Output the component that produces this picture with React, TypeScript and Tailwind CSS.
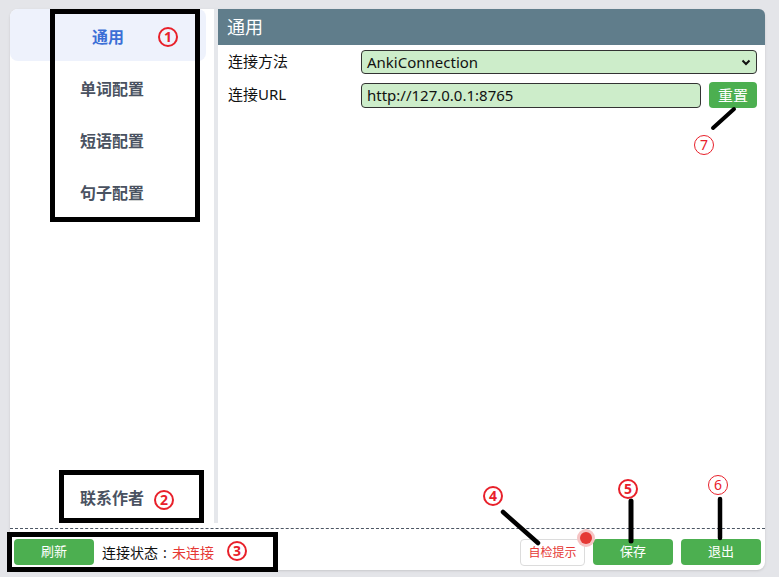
const cjk = { fontFamily: '"Noto Sans", "Noto Sans CJK SC", sans-serif' };

const navItems = ["通用", "单词配置", "短语配置", "句子配置"];

function Mark({ n, x, y, thin }: { n: string; x: number; y: number; thin?: boolean }) {
  return (
    <div
      className={
        "absolute flex h-[20px] w-[20px] -translate-x-1/2 -translate-y-1/2 items-center justify-center rounded-full text-[14px] leading-none text-[#e8202a] " +
        (thin ? "border-[1.5px] border-[#e8202a] font-normal" : "border-[2.5px] border-[#e8202a] font-bold")
      }
      style={{ left: x, top: y }}
    >
      {n}
    </div>
  );
}

export default function App() {
  return (
    <div className="relative h-[577px] w-[779px] overflow-hidden bg-[#e4e5e9] pb-[7px] pl-[10px] pr-[14px] pt-[9px]" style={cjk}>
      <div className="flex h-full flex-col rounded-lg bg-white shadow-sm">
        <div className="flex h-[514px]">
          <aside className="flex w-[204px] flex-col pr-[8px]">
            {navItems.map((item, i) => (
              <div
                key={item}
                className={
                  "flex h-[52px] items-center justify-center pt-[4px] text-[16px] font-semibold " +
                  (i === 0 ? "rounded-lg bg-[#eef2fc] text-[#3b6fd6]" : "pl-[8px] text-[#4a5261]")
                }
              >
                {item}
              </div>
            ))}
            <div className="flex-1" />
            <div className="flex h-[52px] items-center justify-center pl-[8px] pt-[2px] text-[16px] font-semibold text-[#4a5261]">联系作者</div>
          </aside>
          <div className="w-[4px] bg-[#e5e7eb]" />
          <main className="flex flex-1 flex-col">
            <div className="flex h-[36px] items-center rounded-tr-md bg-[#607d8b] pl-[9px] text-[18px] text-white">通用</div>
            <div className="flex flex-col gap-[8px] pl-[10px] pr-[8px] pt-[5px] text-[15px] text-[#111]">
              <div className="flex items-center">
                <div className="w-[133px] -translate-y-px">连接方法</div>
                <div className="flex h-[24px] flex-1 items-center justify-between rounded-[4px] border border-[#333] bg-[#cdedca] pl-[5px] pr-[4px]">
                  <span>AnkiConnection</span>
                  <svg width="12" height="12" viewBox="0 0 12 12">
                    <path d="M2.5 4.5 L6 8 L9.5 4.5" fill="none" stroke="#111" strokeWidth="2" />
                  </svg>
                </div>
              </div>
              <div className="flex items-center">
                <div className="w-[133px] -translate-y-px">连接URL</div>
                <div className="flex h-[25px] flex-1 items-center rounded-[4px] border border-[#333] bg-[#cdedca] pl-[5px]">http://127.0.0.1:8765</div>
                <div className="ml-[8px] flex h-[26px] w-[48px] items-center justify-center rounded-[4px] bg-[#4caf50] text-[15px] text-white">重置</div>
              </div>
            </div>
          </main>
        </div>
        <div className="mt-[5px] border-t border-dashed border-[#4b5563]" />
        <div className="flex flex-1 items-start px-[4px] pt-[10px] text-[14px]">
          <div className="flex h-[26px] w-[80px] items-center justify-center rounded-[4px] bg-[#4caf50] text-[13px] text-white">刷新</div>
          <div className="ml-[8px] flex h-[26px] items-center text-[#111]">
            连接状态<span className="w-[14px] text-center">:</span>
            <span className="text-[#e53935]">未连接</span>
          </div>
          <div className="flex-1" />
          <div className="relative flex h-[27px] w-[65px] items-center justify-center rounded-[4px] border border-[#dcdcdc] bg-white text-[12px] text-[#e53935]">
            自检提示
            <span className="absolute -right-[8px] -top-[8px] h-[12px] w-[12px] rounded-full bg-[#e53935] ring-[3px] ring-[#f6c4c4]" />
          </div>
          <div className="ml-[8px] flex h-[26px] w-[80px] items-center justify-center rounded-[4px] bg-[#4caf50] text-[13px] text-white">保存</div>
          <div className="ml-[8px] flex h-[26px] w-[80px] items-center justify-center rounded-[4px] bg-[#4caf50] text-[13px] text-white">退出</div>
        </div>
      </div>

      {/* annotations */}
      <div className="pointer-events-none absolute left-[50px] top-[9px] h-[213px] w-[150px] border-[5px] border-black" />
      <div className="pointer-events-none absolute left-[59px] top-[470px] h-[53px] w-[145px] border-[5px] border-black" />
      <div className="pointer-events-none absolute left-[7px] top-[532px] h-[40px] w-[271px] border-[5px] border-black" />
      <svg className="pointer-events-none absolute left-0 top-0" width="779" height="577">
        <g stroke="#000" strokeLinecap="round" fill="none">
          <line x1="503" y1="512" x2="538" y2="543" strokeWidth="4.5" />
          <line x1="631" y1="501" x2="631" y2="541" strokeWidth="5" />
          <line x1="720" y1="499" x2="720" y2="538" strokeWidth="4.5" />
          <line x1="734" y1="109" x2="713" y2="128" strokeWidth="4" />
        </g>
      </svg>
      <Mark n="1" x={168} y={37} />
      <Mark n="2" x={164} y={500} />
      <Mark n="3" x={237} y={551} />
      <Mark n="4" x={493} y={496} />
      <Mark n="5" x={628} y={489} />
      <Mark n="6" x={718} y={485} thin />
      <Mark n="7" x={704} y={145} thin />
    </div>
  );
}
